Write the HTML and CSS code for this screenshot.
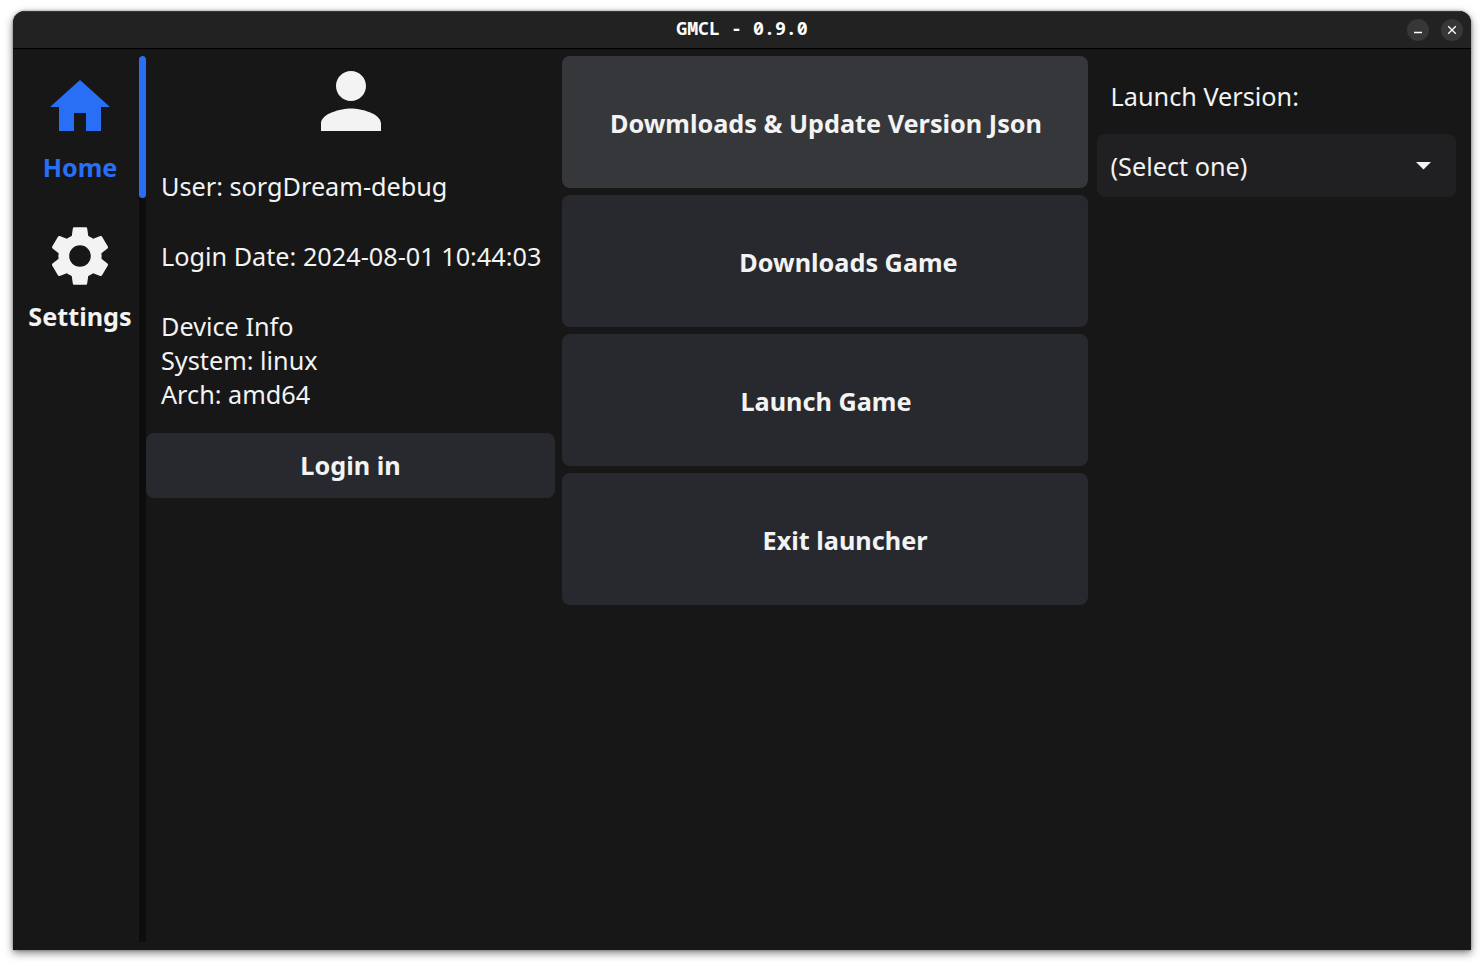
FILE: index.html
```html
<!DOCTYPE html>
<html lang="en">
<head>
<meta charset="utf-8">
<title>GMCL - 0.9.0</title>
<link rel="stylesheet" href="styles.css">
</head>
<body>
<div class="window">
  <header class="titlebar">
    <h1 class="title">GMCL - 0.9.0</h1>
    <div class="controls">
      <button class="control" aria-label="Minimize"><svg viewBox="0 0 22 22"><path d="M7 13.5h8"/></svg></button>
      <button class="control" aria-label="Close"><svg viewBox="0 0 22 22"><path d="M7.2 7.2l7.6 7.6M14.8 7.2l-7.6 7.6"/></svg></button>
    </div>
  </header>
  <main class="content">
    <nav class="tabs">
      <a class="tab tab-active">
        <svg class="tab-icon" viewBox="0 0 24 24"><path d="M10 20v-6h4v6h5v-8h3L12 3 2 12h3v8z"/></svg>
        <span>Home</span>
      </a>
      <a class="tab">
        <svg class="tab-icon" viewBox="0 0 24 24"><path d="M19.14 12.94c.04-.3.06-.61.06-.94 0-.32-.02-.64-.07-.94l2.03-1.58c.18-.14.23-.41.12-.61l-1.92-3.32c-.12-.22-.37-.29-.59-.22l-2.39.96c-.5-.38-1.03-.7-1.62-.94l-.36-2.54c-.04-.24-.24-.41-.48-.41h-3.84c-.24 0-.43.17-.47.41l-.36 2.54c-.59.24-1.13.57-1.62.94l-2.39-.96c-.22-.08-.47 0-.59.22L2.74 8.87c-.12.21-.08.47.12.61l2.03 1.58c-.05.3-.09.63-.09.94s.02.64.07.94l-2.03 1.58c-.18.14-.23.41-.12.61l1.92 3.32c.12.22.37.29.59.22l2.39-.96c.5.38 1.03.7 1.62.94l.36 2.54c.05.24.24.41.48.41h3.84c.24 0 .44-.17.47-.41l.36-2.54c.59-.24 1.13-.56 1.62-.94l2.39.96c.22.08.47 0 .59-.22l1.92-3.32c.12-.22.07-.47-.12-.61l-2.01-1.58zM12 15.6c-1.98 0-3.6-1.62-3.6-3.6s1.62-3.6 3.6-3.6 3.6 1.62 3.6 3.6-1.62 3.6-3.6 3.6z"/></svg>
        <span>Settings</span>
      </a>
    </nav>
    <div class="divider"><div class="indicator"></div></div>
    <section class="account">
      <svg class="avatar" viewBox="0 0 24 24"><path d="M12 12c2.21 0 4-1.79 4-4s-1.79-4-4-4-4 1.79-4 4 1.79 4 4 4zm0 2c-2.67 0-8 1.34-8 4v2h16v-2c0-2.66-5.33-4-8-4z"/></svg>
      <p class="label user">User: sorgDream-debug</p>
      <p class="label login-date">Login Date: 2024-08-01 10:44:03</p>
      <p class="label device">Device Info<br>System: linux<br>Arch: amd64</p>
      <button class="button login">Login in</button>
    </section>
    <section class="actions">
      <button class="button action update"><span>Dowmloads &amp; Update Version Json</span></button>
      <button class="button action download"><span>Downloads Game</span></button>
      <button class="button action launch"><span>Launch Game</span></button>
      <button class="button action exit"><span>Exit launcher</span></button>
    </section>
    <section class="version">
      <p class="label version-label">Launch Version:</p>
      <div class="select"><span>(Select one)</span><svg class="caret" viewBox="0 0 15 8"><path d="M0 0h15L7.5 7.5z"/></svg></div>
    </section>
  </main>
</div>
</body>
</html>
```
FILE: styles.css
```css
* { box-sizing: border-box; }
body {
  margin: 0;
  height: 966px;
  padding: 11px 13px 16px;
  overflow: hidden;
  background: #fff;
  color: #f3f3f3;
  font: 25.24px/34px "Noto Sans", sans-serif;
}
.window {
  height: 939px;
  display: flex;
  flex-direction: column;
  overflow: hidden;
  border-radius: 12px 12px 0 0;
  background: #171717;
  box-shadow: 0 3px 8px rgba(0, 0, 0, .5), 0 0 3px rgba(0, 0, 0, .35);
}
.titlebar {
  height: 38px;
  display: grid;
  grid-template-columns: 1fr auto 1fr;
  align-items: center;
  background: #222;
  border-top: 1px solid #373737;
  border-bottom: 1px solid #000;
}
.title {
  grid-column: 2;
  margin: 0;
  padding-bottom: 4px;
  color: #fff;
  font: bold 18.3px/24px "Noto Sans Mono", "DejaVu Sans Mono", monospace;
}
.controls { display: flex; justify-content: flex-end; gap: 12px; padding-right: 8px; }
.control {
  width: 22px;
  height: 22px;
  padding: 0;
  border: 0;
  border-radius: 50%;
  background: #373737;
}
.control svg { display: block; fill: none; stroke: #fff; stroke-width: 1.3; }
.content { flex: 1; display: flex; padding: 7px 15px 8px 8px; }
.tabs { width: 118px; display: flex; flex-direction: column; gap: 7px; }
.tab {
  height: 142px;
  padding-top: 15px;
  display: flex;
  flex-direction: column;
  align-items: center;
  gap: 7px;
  font-weight: 700;
}
.tab-active { color: #296ff6; }
.tab-icon { width: 72px; height: 72px; flex: none; fill: currentColor; }
.divider { width: 7px; background: #0d0d0d; }
.indicator { height: 142px; border-radius: 4px; background: #296ff6; }
.account { width: 409px; display: flex; flex-direction: column; }
.avatar { width: 90px; height: 90px; margin-left: 160px; fill: #f3f3f3; }
.label { margin: 0; padding-left: 15px; white-space: nowrap; }
.user { padding-top: 23px; }
.login-date, .device { padding-top: 36px; }
.button {
  padding: 0;
  border: 0;
  border-radius: 8px;
  background: #28292e;
  color: #f3f3f3;
  font: bold 25.24px/34px "Noto Sans", sans-serif;
}
.login { height: 65px; margin-top: 22px; padding-bottom: 1px; }
.actions { width: 526px; margin-left: 7px; display: flex; flex-direction: column; gap: 7px; }
.action { height: 132px; padding: 2px 0 0 2px; }
.update { background: #36373b; }
.download { padding-left: 47px; }
.exit { padding-left: 40px; }
.version { width: 359px; margin-left: 9px; }
.version-label { padding: 23px 0 21px 13.6px; }
.select {
  height: 63px;
  display: flex;
  align-items: center;
  justify-content: space-between;
  padding: 0 24.6px 0 13.5px;
  border-radius: 8px;
  background: #202022;
}
.caret { width: 15px; height: 8px; fill: #f3f3f3; }
```
